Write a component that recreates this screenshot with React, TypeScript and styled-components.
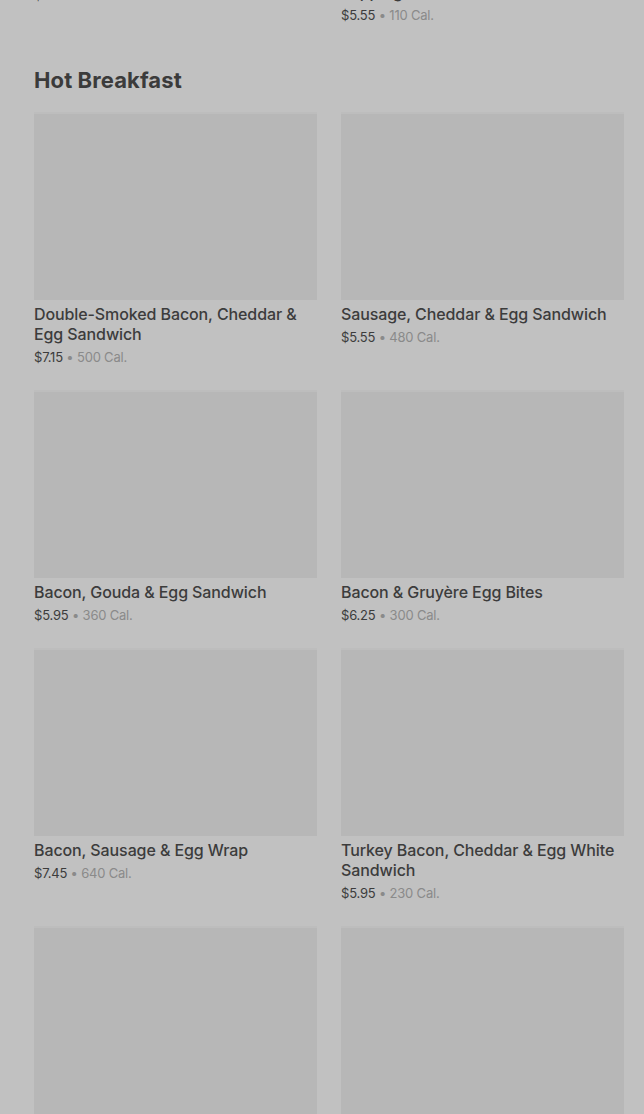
import React from 'react';
import styled, { createGlobalStyle } from 'styled-components';

const GlobalStyle = createGlobalStyle`
  html, body {
    margin: 0;
    padding: 0;
    background: #c1c1c1;
    overflow: hidden;
  }
  body {
    font-family: Inter, "Noto Sans", "Liberation Sans", sans-serif;
    color: #3a3a3a;
  }
`

type Item = { name: string; price: string; cal: number }

const previous: Item[] = [
  { name: 'Classic Oatmeal', price: '$4.45', cal: 160 },
  { name: 'Rolled & Steel-Cut Oatmeal with Topping', price: '$5.55', cal: 110 },
]

const hotBreakfast: Item[] = [
  { name: 'Double-Smoked Bacon, Cheddar & Egg Sandwich', price: '$7.15', cal: 500 },
  { name: 'Sausage, Cheddar & Egg Sandwich', price: '$5.55', cal: 480 },
  { name: 'Bacon, Gouda & Egg Sandwich', price: '$5.95', cal: 360 },
  { name: 'Bacon & Gruyère Egg Bites', price: '$6.25', cal: 300 },
  { name: 'Bacon, Sausage & Egg Wrap', price: '$7.45', cal: 640 },
  { name: 'Turkey Bacon, Cheddar & Egg White Sandwich', price: '$5.95', cal: 230 },
  { name: 'Impossible™ Breakfast Sandwich', price: '$6.95', cal: 420 },
  { name: 'Spinach, Feta & Egg White Wrap', price: '$5.75', cal: 290 },
]

const Page = styled.main`
  padding: 0 20px 0 34px;
`

// the list is scrolled: only the bottom of the previous section shows
const Scrolled = styled.div`
  margin-top: -230px;
`

const Section = styled.section`
  display: flex;
  flex-direction: column;
`

const Heading = styled.h2`
  margin: 41px 0 18px;
  font-size: 22px;
  line-height: 28px;
  font-weight: 700;
  letter-spacing: 0.1px;
  color: #3b3b3b;
`

const Grid = styled.div`
  display: grid;
  grid-template-columns: 283px 283px;
  column-gap: 24px;
  row-gap: 23px;
  align-items: start;
`

const Card = styled.a`
  display: flex;
  flex-direction: column;
  text-decoration: none;
  color: inherit;
`

const Thumb = styled.div`
  height: 188px;
  background: #b7b7b7;
  box-shadow: inset 0 2px 0 #bdbdbd;
`

const Name = styled.div`
  margin-top: 4px;
  font-size: 16px;
  line-height: 20px;
  font-weight: 500;
  letter-spacing: -0.1px;
  color: #3c3c3c;
`

const Meta = styled.div`
  margin-top: 3px;
  font-size: 13px;
  line-height: 20px;
  letter-spacing: -0.2px;
  color: #3c3c3c;
`

const Cal = styled.span`
  color: #8a8a8a;
`

function MenuCard({ item }: { item: Item }) {
  return (
    <Card href="#">
      <Thumb />
      <Name>{item.name}</Name>
      <Meta>
        {item.price} <Cal>• {item.cal} Cal.</Cal>
      </Meta>
    </Card>
  )
}

export default function App() {
  return (
    <Page>
      <GlobalStyle />
      <Scrolled>
        <Section>
          <Grid>
            {previous.map(item => <MenuCard key={item.name} item={item} />)}
          </Grid>
        </Section>
        <Section>
          <Heading>Hot Breakfast</Heading>
          <Grid>
            {hotBreakfast.map(item => <MenuCard key={item.name} item={item} />)}
          </Grid>
        </Section>
      </Scrolled>
    </Page>
  )
}
